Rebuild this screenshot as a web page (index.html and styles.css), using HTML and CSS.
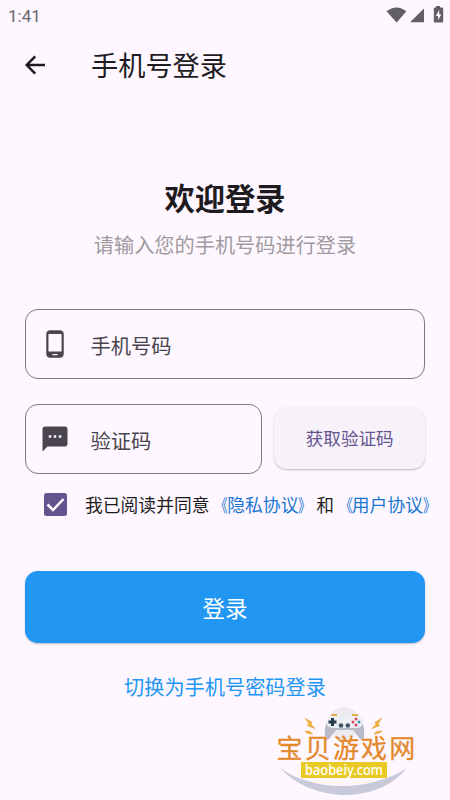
FILE: index.html
```html
<!DOCTYPE html>
<html lang="zh-CN">
<head>
    <meta charset="UTF-8">
    <meta name="viewport" content="width=device-width, initial-scale=1.0">
    <title>手机号登录</title>
    <link rel="stylesheet" href="styles.css">
</head>
<body>
    <div class="status-bar">
        <span class="time">1:41</span>
        <svg class="status-icons" width="56" height="18" viewBox="0 0 56 18">
            <path d="M-.5 4.300Q9.700 -3.400 19.400 4.300L9.700 15.500Z"/>
            <path d="M23 15.200L37 1.500V15.200Z"/>
            <path d="M49-1h4v1.600h2.200q1 0 1 1v13q0 1-1 1h-7.400q-1 0-1-1V1.600q0-1 1-1H49z"/>
            <path class="bolt" d="M52.200 3L48.800 9h2.300v4.200l3.200-6h-2.100z"/>
        </svg>
    </div>

    <div class="app-bar">
        <svg class="back" width="22" height="20" viewBox="0 0 22 20">
            <path d="M20 10H2M10.200 1.300L1.700 10L10.200 18.700"/>
        </svg>
        <span class="title">手机号登录</span>
    </div>

    <main class="login">
        <h1>欢迎登录</h1>
        <p class="subtitle">请输入您的手机号码进行登录</p>

        <div class="field">
            <svg class="field-icon" width="30" height="30" viewBox="0 0 24 24">
                <path d="M16 1H8C6.340 1 5 2.340 5 4v16c0 1.660 1.340 3 3 3h8c1.660 0 3-1.340 3-3V4c0-1.660-1.340-3-3-3zm-2 20h-4v-1h4v1zm3.250-3H6.750V4h10.500v14z"/>
            </svg>
            <span>手机号码</span>
        </div>

        <div class="code-row">
            <div class="field">
                <svg class="field-icon" width="30" height="30" viewBox="0 0 24 24">
                    <path d="M20 2H4c-1.100 0-1.990.900-1.990 2L2 22l4-4h14c1.100 0 2-.900 2-2V4c0-1.100-.900-2-2-2zM9 11H7V9h2v2zm4 0h-2V9h2v2zm4 0h-2V9h2v2z"/>
                </svg>
                <span>验证码</span>
            </div>
            <button class="code-button">获取验证码</button>
        </div>

        <div class="agreement">
            <svg class="checkbox" width="23" height="23" viewBox="0 0 23 23">
                <rect width="23" height="23" rx="2.500"/>
                <path d="M3.500 11.500L9 17L19.500 6"/>
            </svg>
            <span>我已阅读并同意<a><i class="open">《</i>隐私协议<i class="close">》</i></a>和<a><i class="open">《</i>用户协议<i class="close">》</i></a></span>
        </div>

        <button class="login-button">登录</button>
        <a class="switch">切换为手机号密码登录</a>
    </main>

    <div class="watermark">
        <svg width="160" height="100" viewBox="0 0 160 100">
            <circle class="disc" cx="79" cy="23" r="16"/>
            <path class="swoosh" d="M15 68C49 92 104 92 142 68C113 104 49 104 15 68Z"/>
            <!-- controller -->
            <path class="pad-shade" d="M62 21Q59 30 60 37Q61 42 64 39L71 30H88L95 39Q99 42 99 36Q100 29 97 21Z"/>
            <path class="pad" d="M66 16H92Q98 17 98 23Q97 28 91 28H68Q61 27 61 21Q62 17 66 16Z"/>
            <path class="pad-top" d="M66 15H72M87 15H93"/>
            <path class="dpad" d="M67.500 18V26M63.500 22H71.500"/>
            <circle class="stick" cx="76" cy="25.500" r="2.300"/>
            <circle class="stick" cx="82.800" cy="25.500" r="2.300"/>
            <circle class="red" cx="91" cy="19" r="1.500"/>
            <circle class="red" cx="88" cy="22" r="1.500"/>
            <circle class="teal" cx="94" cy="22" r="1.500"/>
            <circle class="red" cx="91" cy="25" r="1.500"/>
            <path class="spark" d="M40.500 18.500L47 22.500L46 24.500L50 28.500L42.500 25.500L44 23.500ZM40 31L45 31.500L47.500 34L42 33ZM116.500 18.500L110 22.500L111 24.500L107 28.500L114.500 25.500L113 23.500ZM117 31L112 31.500L109 34L114 33Z"/>
            <text class="brand" x="11.500" y="58">宝贝游戏网</text>
            <rect class="site-box" x="36" y="62" width="86" height="16"/>
            <text class="site" x="40" y="74.500" textLength="78" lengthAdjust="spacingAndGlyphs">baobeiy.com</text>
        </svg>
    </div>
</body>
</html>
```
FILE: styles.css
```css
* {
    box-sizing: border-box;
}

body {
    margin: 0;
    width: 450px;
    height: 800px;
    background: #fef7ff;
    color: #1d1b20;
    font-family: Roboto, "Noto Sans CJK SC", sans-serif;
    overflow: hidden;
    position: relative;
}

button {
    border: 0;
    padding: 0;
    font-family: inherit;
}

.status-bar {
    display: flex;
    justify-content: space-between;
    height: 30px;
    padding: 7px 7px 0 8px;
}

.time {
    font-size: 17px;
    line-height: 18px;
    color: #67636a;
}

.status-icons {
    fill: #625f64;
    overflow: visible;
}

.status-icons .bolt {
    fill: #fef7ff;
}

.app-bar {
    display: flex;
    align-items: center;
    height: 70px;
    padding-left: 25px;
}

.back {
    fill: none;
    stroke: #1d1b20;
    stroke-width: 2.5px;
}

.title {
    margin-left: 44px;
    padding-top: 4px;
    font-size: 27.2px;
    line-height: 40px;
}

.login {
    display: flex;
    flex-direction: column;
    padding: 78px 25px 0;
}

.login h1 {
    margin: 0;
    font-size: 30.3px;
    line-height: 44px;
    font-weight: 700;
    text-align: center;
}

.subtitle {
    margin: 9px 0 0;
    font-size: 20.2px;
    line-height: 30px;
    text-align: center;
    color: #9f9ba0;
}

.field {
    display: flex;
    align-items: center;
    height: 70px;
    padding-left: 14px;
    border: 1px solid #7d7983;
    border-radius: 13px;
    font-size: 20.3px;
    color: #49454f;
}

.subtitle + .field {
    margin-top: 48px;
}

.field-icon {
    margin-right: 20.5px;
    fill: #49454f;
}

.field span {
    padding-top: 1px;
}

.code-row {
    display: flex;
    align-items: center;
    gap: 12px;
    margin-top: 25px;
}

.code-row .field {
    width: 238px;
}

.code-button {
    width: 151px;
    height: 62px;
    margin-top: -2px;
    padding-bottom: 2px;
    border-radius: 13px;
    background: #f7f2fa;
    box-shadow: 0 1px 2px rgba(0, 0, 0, 0.25);
    color: #65558f;
    font-size: 17.6px;
}

.agreement {
    display: flex;
    align-items: center;
    height: 30px;
    margin-top: 15px;
    padding-left: 19px;
    font-size: 17.8px;
    white-space: nowrap;
}

.agreement a {
    color: #1976d2;
}

.agreement i {
    display: inline-block;
    font-style: normal;
}

.agreement .open {
    transform: translateX(1px) scaleX(0.72);
    transform-origin: right;
}

.agreement .close {
    transform: scaleX(0.72);
    transform-origin: left;
}

.checkbox {
    flex-shrink: 0;
    margin-right: 18px;
    fill: #65558f;
}

.checkbox path {
    fill: none;
    stroke: #fff;
    stroke-width: 2.5px;
}

.login-button {
    height: 72px;
    margin-top: 52px;
    padding-bottom: 1px;
    border-radius: 13px;
    background: #2196f3;
    box-shadow: 0 1px 2px rgba(0, 0, 0, 0.25);
    color: #fff;
    font-size: 22.5px;
}

.switch {
    margin-top: 30px;
    font-size: 20.2px;
    line-height: 30px;
    text-align: center;
    color: #2196f3;
}

.watermark {
    position: absolute;
    left: 265px;
    top: 700px;
}

.disc {
    fill: #eeebf0;
}

.swoosh {
    fill: #c8cad9;
}

.pad {
    fill: #eeeef5;
}

.pad-shade {
    fill: #b9bac8;
}

.pad-top {
    stroke: #e8ae4b;
    stroke-width: 2px;
}

.dpad {
    stroke: #263c4c;
    stroke-width: 3px;
}

.stick {
    fill: #40546a;
}

.red {
    fill: #d84a5d;
}

.teal {
    fill: #3599ad;
}

.spark {
    fill: #f1b62b;
    stroke: #e9a040;
    stroke-width: 0.8px;
}

.brand {
    fill: #e2892b;
    stroke: #e2892b;
    stroke-width: 0.3px;
    font-size: 26px;
    font-weight: 400;
    letter-spacing: 2.2px;
}

.site-box {
    fill: #e9ca25;
}

.site {
    fill: #fff;
    font-family: "Noto Sans", sans-serif;
    font-size: 15px;
    font-weight: 500;
}
```
